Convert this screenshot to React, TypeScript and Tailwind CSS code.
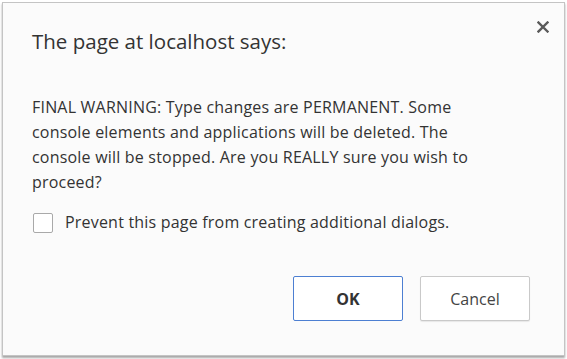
import React from 'react';

export default function App() {
  return (
    <div className="w-[567px] h-[359px] bg-white p-[2px] pb-[3px] font-['Open_Sans',sans-serif] text-[#333]">
      <div className="relative h-full border border-[#c4c4c4] bg-[#fbfbfb] shadow-[0_2px_2px_rgba(0,0,0,0.35)] pl-[29px] pr-[30px] pt-[24px]">
        <button className="absolute right-[11px] top-[14px] flex h-[20px] w-[20px] items-center justify-center">
          <svg width="12" height="12" viewBox="0 0 12 12">
            <path d="M1.5 1.5 L10.5 10.5 M10.5 1.5 L1.5 10.5" stroke="#5a5a5a" strokeWidth="2.4" strokeLinecap="square" />
          </svg>
        </button>
        <h1 className="text-[20.5px] leading-[28px]">The page at localhost says:</h1>
        <p className="mt-[40px] text-[16px] leading-[25px] tracking-[0.2px]">
          FINAL WARNING: Type changes are PERMANENT. Some
          <br />
          console elements and applications will be deleted. The
          <br />
          console will be stopped. Are you REALLY sure you wish to
          <br />
          proceed?
        </p>
        <label className="mt-[15px] flex items-center gap-[12px] text-[16px] leading-[25px] tracking-[0.2px]">
          <span className="ml-[1px] h-[20px] w-[20px] rounded-[2px] border border-[#a9a9a9] bg-white" />
          Prevent this page from creating additional dialogs.
        </label>
        <div className="mt-[41px] flex justify-end gap-[17px] pr-[4px]">
          <button className="h-[45px] w-[110px] rounded-[2px] border border-[#4d7fd2] bg-white text-[16px] font-bold">OK</button>
          <button className="h-[45px] w-[110px] rounded-[2px] border border-[#c9c9c9] bg-white text-[16px] text-[#444] shadow-[0_1px_1px_rgba(0,0,0,0.08)]">Cancel</button>
        </div>
      </div>
    </div>
  );
}
